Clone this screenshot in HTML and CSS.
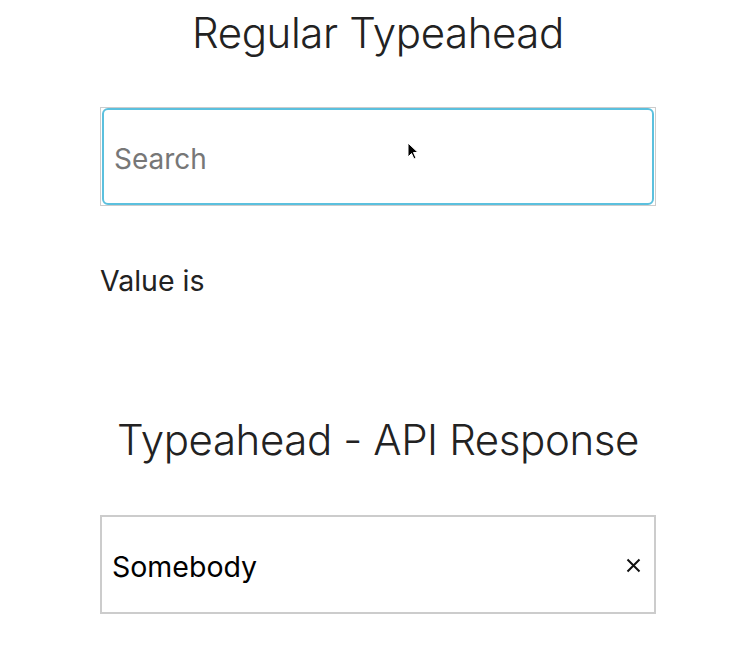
FILE: index.html
```html
<!DOCTYPE html>
<html>
<head>
<meta charset="utf-8">
<link rel="stylesheet" href="styles.css">
</head>
<body>
<main class="page">
  <section class="demo">
    <h1 class="title">Regular Typeahead</h1>
    <div class="field field-focus">
      <input class="input input-focus" type="text" placeholder="Search">
    </div>
    <p class="value">Value is</p>
  </section>
  <section class="demo demo-api">
    <h1 class="title">Typeahead - API Response</h1>
    <div class="field">
      <span class="selected">Somebody</span>
      <svg class="clear" width="15" height="15" viewBox="0 0 15 15" aria-label="clear">
        <path d="M1.5 1.5 L13.5 13.5 M13.5 1.5 L1.5 13.5" stroke="#111" stroke-width="2" stroke-linecap="butt"/>
      </svg>
    </div>
  </section>
</main>
<svg class="cursor" width="14" height="20" viewBox="0 0 14 20">
  <path d="M1 1 L1 15 L4.5 11.5 L7 17 L9 16 L6.5 10.5 L11 10.5 Z" fill="#000" stroke="#fff" stroke-width="1"/>
</svg>
</body>
</html>
```
FILE: styles.css
```css
html, body {
  margin: 0;
  padding: 0;
  background: #fff;
}
body {
  font-family: Inter, "Noto Sans", sans-serif;
  color: #222;
}
.page {
  width: 556px;
  margin: 0 auto;
}
.demo {
  display: flex;
  flex-direction: column;
}
.title {
  margin: 7px 0 0;
  font-size: 42px;
  font-weight: 300;
  line-height: 52px;
  text-align: center;
  color: #222;
  letter-spacing: -0.4px;
}
.field {
  margin-top: 48px;
  height: 95px;
  border: 2px solid #ccc;
  display: flex;
  align-items: center;
  box-sizing: content-box;
}
.field-focus {
  border-width: 1px;
  height: 97px;
}
.input {
  flex: 1;
  height: 100%;
  box-sizing: border-box;
  border: none;
  outline: none;
  font-family: inherit;
  font-size: 28px;
  padding: 4px 10px 0;
  background: transparent;
}
.input-focus {
  border: 2px solid #5bc0de;
  border-radius: 6px;
  margin: 0 1px;
}
.input::placeholder {
  color: #777;
}
.value {
  margin: 58px 0 0;
  font-size: 28.5px;
  line-height: 34px;
  color: #222;
}
.demo-api {
  margin-top: 109px;
}
.demo-api .field {
  margin-top: 49px;
}
.selected {
  flex: 1;
  padding: 4px 0 0 10px;
  font-size: 28.5px;
  color: #000;
}
.clear {
  margin-right: 13px;
  margin-top: 2px;
}
.cursor {
  position: absolute;
  left: 407px;
  top: 142px;
}
```
